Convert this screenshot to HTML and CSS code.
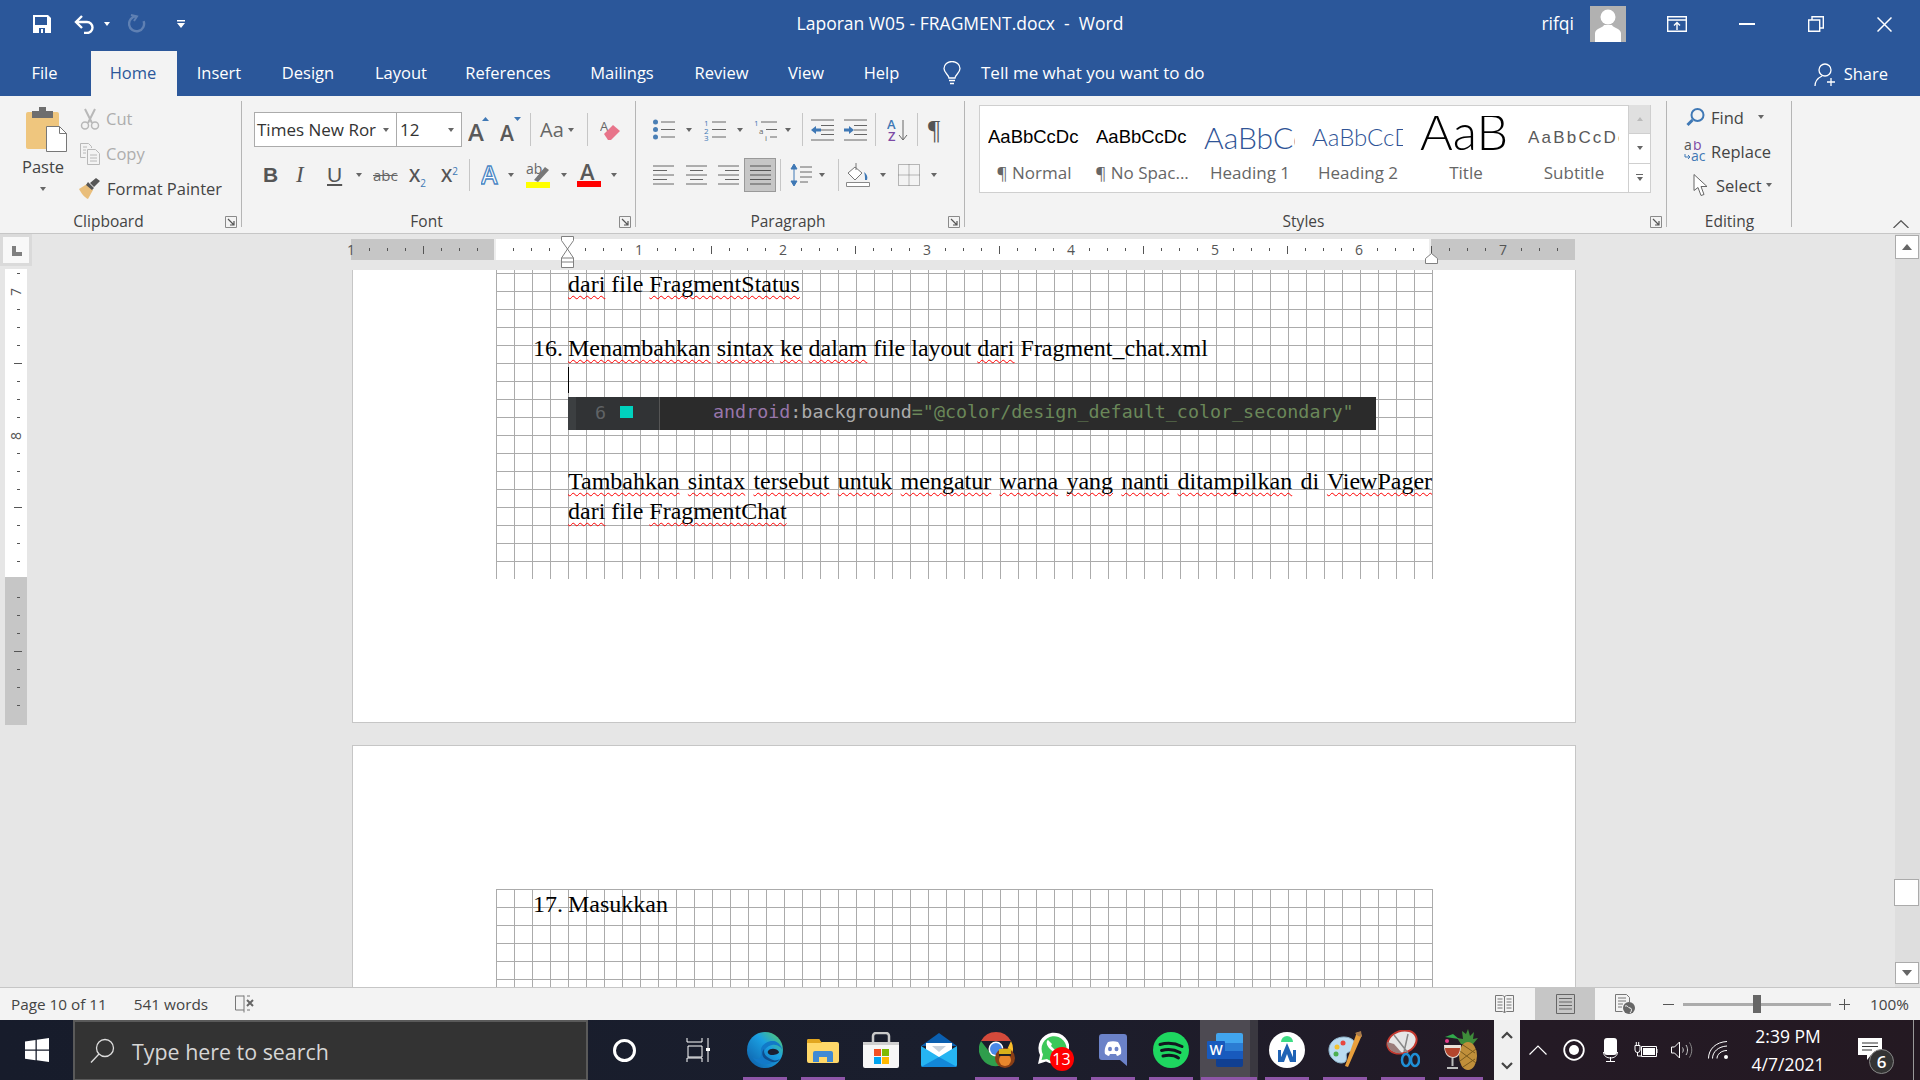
FILE: index.html
```html
<!DOCTYPE html>
<html lang="en">
<head>
    <meta charset="UTF-8">
    <title>Laporan W05 - FRAGMENT.docx - Word</title>
    <link rel="stylesheet" href="styles.css">
</head>
<body>
<svg class="defs" width="0" height="0">
    <symbol id="launcher" viewBox="0 0 12 12"><path d="M.5 11.5V.5h11v11z" fill="none" stroke="#8a8a8a"/><path d="M3 3l6 6M9 5v4H5" fill="none" stroke="#555" stroke-width="1.2"/></symbol>
</svg>
<div class="app">
    <!-- title bar -->
    <div class="titlebar">
        <div class="qat">
            <svg width="20" height="20" viewBox="0 0 20 20"><path d="M1 1h15l3 3v15H1z" fill="#fff"/><path d="M3 3h12v8H3zM7 14h6v5H7z" fill="#2B579A"/><path d="M9 15h2v4H9z" fill="#fff"/></svg>
            <svg class="qat-undo" width="22" height="19" viewBox="0 0 22 19"><path d="M3 7h11a5.5 5.5 0 0 1 0 11h-3" fill="none" stroke="#fff" stroke-width="2.4"/><path d="M9 1L3 7l6 6" fill="none" stroke="#fff" stroke-width="2.4"/></svg>
            <i class="caret caret-white qat-caret"></i>
            <svg class="qat-redo" width="18" height="20" viewBox="0 0 18 20"><path d="M7 2.5A7.5 7.5 0 1 0 15 6" fill="none" stroke="#5F80B3" stroke-width="2.4" transform="rotate(10 9 10)"/><path d="M3 1l6 1.5L6 7" fill="none" stroke="#5F80B3" stroke-width="2"/></svg>
            <svg class="qat-more" width="8" height="8" viewBox="0 0 8 8"><path d="M0 0h8v1.4H0zM0 3h8L4 8z" fill="#fff"/></svg>
        </div>
        <div class="doc-title">Laporan W05 - FRAGMENT.docx  -  Word</div>
        <div class="win-controls">
            <span class="user">rifqi</span>
            <svg class="avatar" width="36" height="36" viewBox="0 0 36 36"><path d="M0 0h36v36H0z" fill="#B1B1B1"/><circle cx="18" cy="11" r="7.5" fill="#fff"/><path d="M5 36v-9c1-5 8-5 9-8h8c1 3 8 3 9 8v9z" fill="#fff"/></svg>
            <svg class="wc-display" width="20" height="16" viewBox="0 0 20 16"><path d="M.7.7h18.6v14.6H.7zM1 4h18" fill="none" stroke="#fff" stroke-width="1.4"/><path d="M10 14V7M7 9.5L10 6.5l3 3" fill="none" stroke="#fff" stroke-width="1.4"/></svg>
            <svg class="wc-min" width="16" height="2" viewBox="0 0 16 2"><path d="M0 0h16v2H0z" fill="#fff"/></svg>
            <svg class="wc-restore" width="16" height="16" viewBox="0 0 16 16"><path d="M.7 4h11v11.3H.7zM4 4V.7h11.3V12H12" fill="none" stroke="#fff" stroke-width="1.4"/></svg>
            <svg class="wc-close" width="15" height="15" viewBox="0 0 15 15"><path d="M.5.5l14 14M14.5.5l-14 14" stroke="#fff" stroke-width="1.5"/></svg>
        </div>
    </div>

    <!-- tabs -->
    <div class="tabs">
        <div class="tab tab-file">File</div>
        <div class="tab tab-home">Home</div>
        <div class="tab tab-insert">Insert</div>
        <div class="tab tab-design">Design</div>
        <div class="tab tab-layout">Layout</div>
        <div class="tab tab-refs">References</div>
        <div class="tab tab-mail">Mailings</div>
        <div class="tab tab-review">Review</div>
        <div class="tab tab-view">View</div>
        <div class="tab tab-help">Help</div>
        <svg class="bulb" width="18" height="24" viewBox="0 0 18 24"><path d="M6 17c0-3-5-5-5-9.500a8 7 0 0 1 16 0C17 12 12 14 12 17z" fill="none" stroke="#fff" stroke-width="1.3"/><path d="M6 19.500h6M7 22.500h4" stroke="#fff" stroke-width="1.5"/></svg>
        <div class="tell">Tell me what you want to do</div>
        <div class="share">
            <svg width="23" height="24" viewBox="0 0 23 24"><circle cx="11" cy="8" r="6" fill="none" stroke="#fff" stroke-width="1.3"/><path d="M1 24c0-5 3-8 7-10M17 16v8M13 20h8" fill="none" stroke="#fff" stroke-width="1.3"/></svg>
            <span>Share</span>
        </div>
    </div>

    <!-- ribbon -->
    <div class="ribbon">
        <div class="group group-clipboard">
            <div class="group-body clip-body">
                <div class="paste">
                    <svg width="41" height="45" viewBox="0 0 41 45"><path d="M2 5h29a2 2 0 0 1 2 2v35H2a2 2 0 0 1-2-2V7a2 2 0 0 1 2-2z" fill="#EFC67E"/><path d="M6 4h7V0h7v4h7v7H6z" fill="#6E6E6E"/><path d="M20.500 19.500h13l7 7v18h-20z" fill="#fff" stroke="#777"/><path d="M33.500 19.500v7h7" fill="none" stroke="#777"/></svg>
                    <span class="paste-label">Paste</span>
                    <i class="caret paste-caret"></i>
                </div>
                <div class="clip-list">
                    <div class="clip-row muted">
                        <svg width="20" height="22" viewBox="0 0 20 22"><path d="M5 1l7 14M15 1L8 15" stroke="#B8B8B8" stroke-width="2" fill="none"/><circle cx="5" cy="17.500" r="3.500" fill="none" stroke="#B8B8B8" stroke-width="1.500"/><circle cx="15" cy="17.500" r="3.500" fill="none" stroke="#B8B8B8" stroke-width="1.500"/></svg>
                        <span>Cut</span>
                    </div>
                    <div class="clip-row muted">
                        <svg width="20" height="22" viewBox="0 0 20 22"><path d="M.5.5h8l3 3V5M.5.500v14h5M7.500 6.500h8l4 4v11h-12z" fill="#f3f3f3" stroke="#B8B8B8"/><path d="M10 12h7M10 15h7M10 18h7M3 4h4M3 7h3M3 10h3" stroke="#B8B8B8"/></svg>
                        <span>Copy</span>
                    </div>
                    <div class="clip-row clip-painter">
                        <svg width="22" height="21" viewBox="0 0 22 21"><path d="M0 11l8-5 6 6-5 9c-3-1-7-6-9-10z" fill="#E9BE7B"/><path d="M7 7l2-3 6 6-2 2zM11 5l6-5 4 3-6 6z" fill="#565656"/></svg>
                        <span>Format Painter</span>
                    </div>
                </div>
            </div>
            <div class="group-label">Clipboard</div>
            <svg class="launcher" width="12" height="12"><use href="#launcher"/></svg>
        </div>

        <div class="group group-font">
            <div class="group-body">
                <div class="font-row1">
                    <div class="combo">
                        <div class="combo-font"><span>Times New Ror</span><i class="caret"></i></div>
                        <div class="combo-size"><span>12</span><i class="caret"></i></div>
                    </div>
                    <svg width="24" height="26" viewBox="0 0 24 26"><text x="0" y="24" class="ic-text ic-bold" font-size="24" fill="#595959">A</text><path d="M14 4l3.500-4 3.500 4z" fill="#3F78B5"/></svg>
                    <svg width="22" height="26" viewBox="0 0 22 26"><text x="0" y="24" class="ic-text ic-bold" font-size="21" fill="#595959">A</text><path d="M14 0h7l-3.500 4z" fill="#3F78B5"/></svg>
                    <i class="vsep"></i>
                    <div class="icon-caret"><span class="aa">Aa</span><i class="caret"></i></div>
                    <i class="vsep"></i>
                    <svg width="20" height="22" viewBox="0 0 20 22"><text x="0" y="12" class="ic-text" font-size="13" fill="#666">A</text><path d="M4 15l9-9 7 6-9 9H8z" fill="#E8748A"/></svg>
                </div>
                <div class="font-row2">
                    <b class="fmt fmt-b">B</b>
                    <i class="fmt fmt-i">I</i>
                    <u class="fmt fmt-u">U</u>
                    <i class="caret"></i>
                    <s class="fmt-abc">abc</s>
                    <span class="fmt-x">X<sub>2</sub></span>
                    <span class="fmt-x">X<sup>2</sup></span>
                    <i class="vsep vsep-tall"></i>
                    <svg width="18" height="24" viewBox="0 0 18 24"><text x="0" y="21" class="ic-text ic-bold" font-size="25" fill="#fff" stroke="#4A86C4" stroke-width="1.300">A</text></svg>
                    <i class="caret"></i>
                    <svg width="24" height="25" viewBox="0 0 24 25"><text x="0" y="11" class="ic-text" font-size="14" fill="#666">ab</text><path d="M8 17L19 4l4 3-11 12z" fill="#777"/><path d="M0 19h24v6H0z" fill="#FFFF00"/></svg>
                    <i class="caret"></i>
                    <svg width="24" height="24" viewBox="0 0 24 24"><text x="3" y="17" class="ic-text ic-bold" font-size="22" fill="#595959">A</text><path d="M0 18h24v6H0z" fill="#FF0000"/></svg>
                    <i class="caret"></i>
                </div>
            </div>
            <div class="group-label">Font</div>
            <svg class="launcher" width="12" height="12"><use href="#launcher"/></svg>
        </div>

        <div class="group group-para">
            <div class="group-body">
                <div class="para-row1">
                    <svg width="22" height="21" viewBox="0 0 22 21"><circle cx="2.500" cy="3" r="2.500" fill="#4A7FB5"/><circle cx="2.500" cy="10.500" r="2.500" fill="#4A7FB5"/><circle cx="2.500" cy="18" r="2.500" fill="#4A7FB5"/><path d="M8 3h14M8 10.500h14M8 18h14" stroke="#666"/></svg>
                    <i class="caret"></i>
                    <svg width="22" height="22" viewBox="0 0 22 22"><text x="0" y="7" class="ic-text" font-size="8" fill="#3F78B5">1</text><text x="0" y="14.500" class="ic-text" font-size="8" fill="#3F78B5">2</text><text x="0" y="22" class="ic-text" font-size="8" fill="#3F78B5">3</text><path d="M8 3h14M8 10.500h14M8 18h14" stroke="#666"/></svg>
                    <i class="caret"></i>
                    <svg width="23" height="22" viewBox="0 0 23 22"><text x="0" y="7" class="ic-text" font-size="8" fill="#3F78B5">1</text><text x="5" y="14.500" class="ic-text" font-size="8" fill="#666">a</text><text x="11" y="22" class="ic-text" font-size="8" fill="#666">i</text><path d="M7 3h16M12 10.500h11M16 18h7" stroke="#666"/></svg>
                    <i class="caret"></i>
                    <i class="vsep"></i>
                    <svg width="23" height="22" viewBox="0 0 23 22"><path d="M0 1h23M10 6.500h13M10 11h13M10 15.500h13M0 21h23" stroke="#666"/><path d="M0 11l5-4v2.500h5v3H5V15z" fill="#3F78B5"/></svg>
                    <svg width="23" height="22" viewBox="0 0 23 22"><path d="M0 1h23M10 6.500h13M10 11h13M10 15.500h13M0 21h23" stroke="#666"/><path d="M10 11L5 7v2.500H0v3h5V15z" fill="#3F78B5"/></svg>
                    <i class="vsep"></i>
                    <svg width="21" height="24" viewBox="0 0 21 24"><text x="0" y="11" class="ic-text ic-bold" font-size="13" fill="#3F78B5">A</text><text x="1" y="23" class="ic-text ic-bold" font-size="13" fill="#7C4AA5">Z</text><path d="M16 2v19M12 17l4 5 4-5" fill="none" stroke="#666"/></svg>
                    <i class="vsep"></i>
                    <span class="pilcrow">¶</span>
                </div>
                <div class="para-row2">
                    <svg width="21" height="21" viewBox="0 0 21 21"><path d="M0 1h21M0 5.500h14M0 10h21M0 14.500h14M0 19h21" stroke="#666"/></svg>
                    <svg width="21" height="21" viewBox="0 0 21 21"><path d="M0 1h21M4 5.500h13M0 10h21M4 14.500h13M0 19h21" stroke="#666"/></svg>
                    <svg width="21" height="21" viewBox="0 0 21 21"><path d="M0 1h21M7 5.500h14M0 10h21M7 14.500h14M0 19h21" stroke="#666"/></svg>
                    <div class="justify-on"><svg width="21" height="21" viewBox="0 0 21 21"><path d="M0 1h21M0 5.500h21M0 10h21M0 14.500h21M0 19h21" stroke="#555"/></svg></div>
                    <i class="vsep vsep-tall"></i>
                    <svg width="22" height="24" viewBox="0 0 22 24"><path d="M4 2v20M1 6l3-5 3 5zM1 18l3 5 3-5z" fill="#3F78B5" stroke="#3F78B5"/><path d="M10 5h12M10 10h12M10 15h12M10 20h8" stroke="#666" transform="translate(0 -1)"/></svg>
                    <i class="caret"></i>
                    <i class="vsep vsep-tall"></i>
                    <svg width="24" height="24" viewBox="0 0 24 24"><path d="M9 4l7 6-7 7-7-7z" fill="#fff" stroke="#777"/><path d="M10 0v7" stroke="#777"/><path d="M18 9c3 2 4 5 3 8h-2c0-3 0-5-1-8z" fill="#3F78B5"/><path d="M.5 19.500h23v4H.5z" fill="#fff" stroke="#888"/></svg>
                    <i class="caret"></i>
                    <svg width="22" height="22" viewBox="0 0 22 22"><path d="M.5.500h21v21H.5zM11 .5v21M.5 11h21" fill="none" stroke="#777" stroke-dasharray="1 1"/></svg>
                    <i class="caret"></i>
                </div>
            </div>
            <div class="group-label">Paragraph</div>
            <svg class="launcher" width="12" height="12"><use href="#launcher"/></svg>
        </div>

        <div class="group group-styles">
            <div class="group-body">
                <div class="gallery">
                    <div class="style-item"><div class="preview pv-normal">AaBbCcDc</div><div class="style-name">¶ Normal</div></div>
                    <div class="style-item"><div class="preview pv-normal">AaBbCcDc</div><div class="style-name">¶ No Spac...</div></div>
                    <div class="style-item"><div class="preview pv-h1">AaBbCcDc</div><div class="style-name">Heading 1</div></div>
                    <div class="style-item"><div class="preview pv-h2">AaBbCcDc</div><div class="style-name">Heading 2</div></div>
                    <div class="style-item"><div class="preview pv-title">AaBbCc</div><div class="style-name">Title</div></div>
                    <div class="style-item"><div class="preview pv-sub">AaBbCcDc</div><div class="style-name">Subtitle</div></div>
                    <div class="gallery-scroll">
                        <div class="gs-btn gs-up"><i class="caret caret-up"></i></div>
                        <div class="gs-btn"><i class="caret"></i></div>
                        <div class="gs-btn gs-more"><i class="gs-bar"></i><i class="caret"></i></div>
                    </div>
                </div>
            </div>
            <div class="group-label">Styles</div>
            <svg class="launcher" width="12" height="12"><use href="#launcher"/></svg>
        </div>

        <div class="group group-edit">
            <div class="group-body edit-list">
                <div class="edit-row">
                    <svg width="20" height="20" viewBox="0 0 20 20"><circle cx="12" cy="8" r="6" fill="none" stroke="#3F78B5" stroke-width="2"/><path d="M7 13l-5 5" stroke="#3F78B5" stroke-width="3"/></svg>
                    <span>Find</span><i class="caret caret-find"></i>
                </div>
                <div class="edit-row">
                    <svg width="23" height="21" viewBox="0 0 23 21"><text x="0" y="9" class="ic-text" font-size="14" fill="#555">a</text><text x="9" y="9" class="ic-text" font-size="14" fill="#7C4AA5">b</text><text x="7" y="20" class="ic-text" font-size="14" fill="#3F78B5">ac</text><path d="M1 13v3h5M4 14l2 2-2 2" fill="none" stroke="#3F78B5"/></svg>
                    <span>Replace</span>
                </div>
                <div class="edit-row">
                    <svg class="select-ic" width="14" height="22" viewBox="0 0 14 22"><path d="M.5.500v16l4-3 3 8 3-1-3-8h6z" fill="#fff" stroke="#666"/></svg>
                    <span>Select</span><i class="caret caret-select"></i>
                </div>
            </div>
            <div class="group-label label-edit">Editing</div>
        </div>

        <svg class="collapse" width="16" height="8" viewBox="0 0 16 8"><path d="M.5 8L8 .7 15.500 8" fill="none" stroke="#555" stroke-width="1.200"/></svg>
    </div>

    <!-- document -->
    <div class="doc">
        <div class="vcol">
            <div class="tabsel"><svg width="10" height="10" viewBox="0 0 10 10"><path d="M0 0h4v6h6v4H0z" fill="#7F7F7F"/></svg></div>
            <div class="vscale">
                <div class="vhead"></div>
                <div class="vinch"><span>7</span></div>
                <div class="vinch"><span>8</span></div>
                <div class="vinch"></div>
            </div>
        </div>
        <div class="doc-main">
            <div class="hruler">
                <div class="hscale">
                    <div class="inch"><span>1</span></div>
                    <div class="inch"></div>
                    <div class="inch"><span>1</span></div>
                    <div class="inch"><span>2</span></div>
                    <div class="inch"><span>3</span></div>
                    <div class="inch"><span>4</span></div>
                    <div class="inch"><span>5</span></div>
                    <div class="inch"><span>6</span></div>
                    <div class="inch inch-end"><span>7</span></div>
                </div>
                <svg class="marker-left" width="13" height="32" viewBox="0 0 13 32"><path d="M.5.500h12v4L6.500 13 .5 4.500zM6.500 13l6 9v9.500H.5V22zM.5 22h12" fill="#fff" stroke="#808080"/><path d="M.5 26h12" stroke="#808080"/></svg>
                <svg class="marker-right" width="13" height="11" viewBox="0 0 13 11"><path d="M6.500.5l6 5v5H.5v-5z" fill="#fff" stroke="#808080"/></svg>
            </div>
            <div class="pages">
                <div class="page page-first">
                    <div class="grid grid-first">
                        <p class="line line-first"><span class="sp">dari</span> file <span class="sp">FragmentStatus</span></p>
                        <p class="line line-item"><span class="num">16.</span><span class="sp">Menambahkan</span> <span class="sp">sintax</span> <span class="sp">ke</span> <span class="sp">dalam</span> file layout <span class="sp">dari</span> Fragment_chat.xml</p>
                        <div class="text-cursor"></div>
                        <div class="code-shot">
                            <div class="code-gutter"><span class="code-no">6</span><i class="code-swatch"></i></div>
                            <div class="code-text"><span class="c-attr">android</span><span class="c-plain">:background</span><span class="c-str">="@color/design_default_color_secondary"</span></div>
                        </div>
                        <p class="line line-just"><span class="sp">Tambahkan</span> <span class="sp">sintax</span> <span class="sp">tersebut</span> <span class="sp">untuk</span> <span class="sp">mengatur</span> <span class="sp">warna</span> <span class="sp">yang</span> <span class="sp">nanti</span> <span class="sp">ditampilkan</span> di <span class="sp">ViewPager</span></p>
                        <p class="line line-next"><span class="sp">dari</span> file <span class="sp">FragmentChat</span></p>
                    </div>
                </div>
                <div class="page page-second">
                    <div class="grid grid-second">
                        <p class="line line-17"><span class="num">17.</span>Masukkan</p>
                    </div>
                </div>
            </div>
        </div>
        <div class="vscroll">
            <div class="sb-btn sb-up"><i class="sb-arrow sb-arrow-up"></i></div>
            <div class="sb-thumb"></div>
            <div class="sb-btn sb-down"><i class="sb-arrow"></i></div>
        </div>
    </div>

    <!-- status bar -->
    <div class="statusbar">
        <span class="st-page">Page 10 of 11</span>
        <span class="st-words">541 words</span>
        <svg class="st-proof" width="20" height="18" viewBox="0 0 20 18"><path d="M9 1H.5v14H9M9 .5v17M12 1h3M12 15h3" fill="none" stroke="#777"/><path d="M12 5l6 6M18 5l-6 6" stroke="#666" stroke-width="2"/></svg>
        <div class="st-right">
            <svg class="st-read" width="19" height="20" viewBox="0 0 19 20"><path d="M.5 1.500h7l2 1 2-1h7v16h-7l-2 1-2-1h-7zM9.500 2.500v16M2.500 5h5M2.500 8h5M2.500 11h5M2.500 14h5M11.500 5h5M11.500 8h5M11.500 11h5M11.500 14h5" fill="none" stroke="#777"/></svg>
            <div class="st-print"><svg width="19" height="20" viewBox="0 0 19 20"><path d="M.5.500h18v19H.5zM3 4.500h13M3 8h13M3 11.500h13M3 15h13" fill="none" stroke="#666"/></svg></div>
            <svg class="st-web" width="20" height="20" viewBox="0 0 20 20"><path d="M.5.500h11l3 3V8M.5.500v17h7M3 4h8M3 7h8M3 10h5M3 13h4" fill="none" stroke="#777"/><circle cx="14" cy="14" r="6" fill="#666"/><path d="M10 12c3-1 3 2 5 2s2 3 0 5" fill="none" stroke="#f3f3f3"/></svg>
            <i class="zoom-minus"></i>
            <div class="zoom-slider"><i class="zoom-thumb"></i></div>
            <svg class="zoom-plus" width="11" height="11" viewBox="0 0 11 11"><path d="M5.500 0v11M0 5.500h11" stroke="#555"/></svg>
            <span class="zoom-val">100%</span>
        </div>
    </div>

    <!-- taskbar -->
    <div class="taskbar">
        <div class="tb-start"><svg width="24" height="24" viewBox="0 0 24 24"><path d="M0 3.500l10.500-1.500v9.500H0zM11.800 1.800L24 0v11.500H11.800zM0 12.800h10.500v9.500L0 20.800zM11.800 12.800H24V24l-12.200-1.800z" fill="#fff"/></svg></div>
        <div class="tb-search">
            <svg width="25" height="25" viewBox="0 0 25 25"><circle cx="15" cy="10" r="8.500" fill="none" stroke="#ddd" stroke-width="1.300"/><path d="M9 16L1 24.500" stroke="#ddd" stroke-width="1.300"/></svg>
            <span>Type here to search</span>
        </div>
        <div class="tb-cortana"><i class="cortana-ring"></i></div>
        <div class="tb-taskview"><svg width="24" height="24" viewBox="0 0 24 24"><path d="M1 0v4h15V0M2 8h14v11H2zM1 24v-4h15v4M22 0v24" fill="none" stroke="#fff" stroke-width="1"/><path d="M20 10h4v3h-4z" fill="#fff"/></svg></div>

        <div class="app-slot on"><svg width="36" height="36" viewBox="0 0 36 36"><defs><linearGradient id="edgeA" x1="0" y1="1" x2="1" y2="0"><stop offset="0" stop-color="#0C59A4"/><stop offset=".6" stop-color="#1BA0E2"/><stop offset="1" stop-color="#5FD05A"/></linearGradient></defs><circle cx="18" cy="18" r="18" fill="url(#edgeA)"/><path d="M36 20c-1-5-6-8-11-7-6 1-9 6-8 11 1 4 6 7 10 6-7 4-18 3-22-6C9 30 16 26 14 19 13 14 20 8 27 9c5 1 8 6 9 11z" fill="#1279C8"/><path d="M21 19c2-3 9-3 11 1 0 2-4 3-7 3-3 0-5-2-4-4z" fill="#1B2031"/><path d="M20 28c-5-2-6-8-3-11-1 5 3 9 9 11 2 1 5 0 7-1-4 5-9 3-13 1z" fill="#0D4E8F"/></svg></div>
        <div class="app-slot on on-split"><svg width="32" height="26" viewBox="0 0 32 26"><path d="M0 4a2 2 0 0 1 2-2h10l2 3h16a2 2 0 0 1 2 2v17a2 2 0 0 1-2 2H2a2 2 0 0 1-2-2z" fill="#FFD869"/><path d="M0 4a2 2 0 0 1 2-2h10l3 4H0z" fill="#E2A61F"/><path d="M6 25v-9a2 2 0 0 1 2-2h16a2 2 0 0 1 2 2v9h-6v-5h-8v5z" fill="#3F8AD4"/></svg></div>
        <div class="app-slot"><svg width="36" height="36" viewBox="0 0 36 36"><path d="M10 10V4a3 3 0 0 1 3-3h10a3 3 0 0 1 3 3v6" fill="none" stroke="#C9C9C9" stroke-width="2.500"/><path d="M0 10h36v24a2 2 0 0 1-2 2H2a2 2 0 0 1-2-2z" fill="#F7F7F7"/><path d="M0 10h36v3H0z" fill="#CFCFCF"/><path d="M11 17h7v7h-7z" fill="#F25022"/><path d="M19 17h7v7h-7z" fill="#7FBA00"/><path d="M11 25h7v7h-7z" fill="#00A4EF"/><path d="M19 25h7v7h-7z" fill="#FFB900"/></svg></div>
        <div class="app-slot"><svg width="36" height="34" viewBox="0 0 36 34"><path d="M18 0l18 13H0z" fill="#0A5FB0"/><path d="M5 10h26v8l-13 8-13-8z" fill="#fff"/><path d="M11 13h14l-7 6z" fill="#C9D3DD"/><path d="M0 13l18 11 18-11v19a2 2 0 0 1-2 2H2a2 2 0 0 1-2-2z" fill="#26B5F2"/><path d="M0 34l18-10 18 10z" fill="#1287D8"/></svg></div>
        <div class="app-slot on on-split"><svg width="37" height="36" viewBox="0 0 37 36"><path d="M2 9a17 17 0 0 1 30 0H17z" fill="#D34A3B"/><path d="M32 9a17 17 0 0 1-13 25l7-12z" fill="#FBBD2A"/><path d="M2 9a17 17 0 0 0 17 25l7-12H12z" fill="#2F9E4C"/><circle cx="17" cy="17" r="7.500" fill="#fff"/><circle cx="17" cy="17" r="6" fill="#4A89E8"/><ellipse cx="26" cy="26" rx="10" ry="10" fill="#8A3F16"/><ellipse cx="26" cy="28" rx="6" ry="6" fill="#E8862C"/><path d="M20 17h12v5H20z" fill="#D8B11A"/><path d="M20 22h12v2H20z" fill="#222"/></svg></div>
        <div class="app-slot on"><div class="wa"><svg width="32" height="32" viewBox="0 0 32 32"><path d="M1 32l2-9A15.500 15.500 0 1 1 9 29.500z" fill="#fff"/><path d="M4.500 28l1.500-5.500A12.500 12.500 0 1 1 10 27z" fill="#3CC85A"/><path d="M11 8c-2 1-2 5 2 9s8 5 10 3l-3-3-2 1-4-4 1-2z" fill="#fff"/></svg><span class="wa-badge">13</span></div></div>
        <div class="app-slot on"><svg width="28" height="32" viewBox="0 0 28 32"><path d="M3 0h22a3 3 0 0 1 3 3v29l-7-6H3a3 3 0 0 1-3-3V3a3 3 0 0 1 3-3z" fill="#6B82C8"/><path d="M9 8c3-1 7-1 10 0 2 3 4 7 3 12-2 1-3 2-4 2l-1-2H11l-1 2c-1 0-2-1-4-2-1-5 1-9 3-12z" fill="#fff"/><ellipse cx="11" cy="15" rx="2" ry="2.200" fill="#6B82C8"/><ellipse cx="17.500" cy="15" rx="2" ry="2.200" fill="#6B82C8"/></svg></div>
        <div class="app-slot on"><svg width="36" height="36" viewBox="0 0 36 36"><circle cx="18" cy="18" r="18" fill="#1ED760"/><path d="M7 12.500c7-2 15-1.500 22 2M8.500 18.500c6-1.500 13-1 18.500 2M10 24c5-1 11-1 15.500 2" fill="none" stroke="#12171F" stroke-width="3" stroke-linecap="round"/></svg></div>
        <div class="app-slot on word-slot"><svg width="36" height="34" viewBox="0 0 36 34"><path d="M9 2a2 2 0 0 1 2-2h23a2 2 0 0 1 2 2v8H9z" fill="#41A5EE"/><path d="M9 10h27v8H9z" fill="#2B7CD3"/><path d="M9 18h27v8H9z" fill="#185ABD"/><path d="M9 26h27v6a2 2 0 0 1-2 2H11a2 2 0 0 1-2-2z" fill="#103F91"/><path d="M1 8h16a1 1 0 0 1 1 1v16a1 1 0 0 1-1 1H1a1 1 0 0 1-1-1V9a1 1 0 0 1 1-1z" fill="#185ABD"/><text x="9" y="22" text-anchor="middle" class="ic-text ic-bold" font-size="14" fill="#fff">W</text></svg></div>
        <div class="app-slot on"><svg width="36" height="36" viewBox="0 0 36 36"><circle cx="18" cy="18" r="18" fill="#fff"/><path d="M12 10a6 6 0 0 1 12 0z" fill="#3DDC84"/><path d="M18 11l-8 19h5l3-8 3 8h5z" fill="#1F63B5"/><path d="M9 18h3v12H9zM24 18h3v12h-3z" fill="#1F63B5"/></svg></div>
        <div class="app-slot on"><svg width="34" height="38" viewBox="0 0 34 38"><path d="M2 24C-2 14 6 6 16 6c8 0 13 5 11 11-1 4-6 3-8 5s1 6-2 9c-5 3-12-1-15-7z" fill="#BBDCF0" stroke="#8FB5CC"/><circle cx="9" cy="16" r="2.500" fill="#F2C230"/><circle cx="15" cy="12" r="2.500" fill="#E8483F"/><circle cx="8" cy="23" r="2.500" fill="#4CAF50"/><path d="M29 1l5 3-14 32-3-1z" fill="#E89F3C"/><path d="M27 2l6-2 1 6-4-1z" fill="#A77A4B"/></svg></div>
        <div class="app-slot on"><svg width="34" height="40" viewBox="0 0 34 40"><ellipse cx="16" cy="12" rx="15" ry="11" fill="#E6E6E6" stroke="#C2382E" stroke-width="2" transform="rotate(-20 16 12)"/><path d="M1 12c0 8 8 12 15 11L8 14z" fill="#9A7C7A"/><path d="M8 5l14 18M22 4L18 22" stroke="#888" stroke-width="1.500"/><ellipse cx="20" cy="30" rx="4" ry="6" fill="none" stroke="#1F8FD6" stroke-width="2.500"/><ellipse cx="29" cy="30" rx="4" ry="6" fill="none" stroke="#1F8FD6" stroke-width="2.500"/></svg></div>
        <div class="app-slot on"><svg width="34" height="42" viewBox="0 0 34 42"><path d="M24 0l2 7 4-4-1 7 5-1-5 6H17l-4-6 6 1-1-8 4 3z" fill="#3E8C3A"/><ellipse cx="24" cy="27" rx="9" ry="14" fill="#C08F3A"/><path d="M16 22l16 12M16 32l16-12M19 16l12 8M19 38l12-8" stroke="#7A5A1D"/><path d="M0 16h17c0 9-3 13-8 13S0 25 0 16z" fill="#E9E1D8"/><path d="M1 19h15c0 5-3 9-7 9s-8-4-8-9z" fill="#B3452D"/><path d="M8.500 29v8M3 39h11" stroke="#bbb" stroke-width="2"/><path d="M1 8l8-3 6 5z" fill="#31A84B"/><circle cx="3" cy="12" r="2" fill="#E83E8C"/></svg></div>

        <div class="tb-overflow">
            <svg width="12" height="8" viewBox="0 0 12 8"><path d="M1 7l5-5 5 5" fill="none" stroke="#444" stroke-width="2.200"/></svg>
            <svg width="12" height="8" viewBox="0 0 12 8"><path d="M1 1l5 5 5-5" fill="none" stroke="#444" stroke-width="2.200"/></svg>
        </div>
        <div class="tray"><svg width="18" height="10" viewBox="0 0 18 10"><path d="M.5 9.500L9 1l8.500 8.500" fill="none" stroke="#fff" stroke-width="1.200"/></svg></div>
        <div class="tray"><svg width="22" height="22" viewBox="0 0 22 22"><circle cx="11" cy="11" r="9.800" fill="none" stroke="#fff" stroke-width="1.800"/><circle cx="11" cy="11" r="5" fill="#fff"/></svg></div>
        <div class="tray"><svg width="15" height="24" viewBox="0 0 15 24"><path d="M4 0h7a3 3 0 0 1 3 3v11a3 3 0 0 1-3 3H4a3 3 0 0 1-3-3V3a3 3 0 0 1 3-3z" fill="#fff"/><path d="M.5 14c0 8 14 8 14 0M7.500 19v4M3 23.500h9" fill="none" stroke="#fff"/></svg></div>
        <div class="tray"><svg width="24" height="16" viewBox="0 0 24 16"><path d="M7.500 4.500h15v10h-15z" fill="#231A24" stroke="#fff"/><path d="M9 6h12v7H9z" fill="#fff"/><path d="M23 7v4" stroke="#fff"/><path d="M1 3.500h5V8a2.500 2.500 0 0 1-5 0zM2.300 0v3.500M4.700 0v3.500M3.500 10v4h4" fill="none" stroke="#fff"/></svg></div>
        <div class="tray"><svg width="22" height="18" viewBox="0 0 22 18"><path d="M.5 6h3L8.500 1v16l-5-5h-3z" fill="none" stroke="#fff"/><path d="M11.500 6.500c1 1.500 1 3.500 0 5M15 4c2 3 2 7 0 10" fill="none" stroke="#ccc"/><path d="M18.500 1.500c3 5 3 10 0 15" fill="none" stroke="#888"/></svg></div>
        <div class="tray"><svg width="20" height="18" viewBox="0 0 20 18"><path d="M.5 17.500C.5 8 8 1 19 .5M4.500 17.500C4.500 11 10 5.500 19 5M9 17.500c0-4 4-8 10-8" fill="none" stroke="#fff"/><circle cx="18" cy="16" r="2" fill="#fff"/></svg></div>
        <div class="clock"><div>2:39 PM</div><div>4/7/2021</div></div>
        <div class="notify">
            <svg width="24" height="22" viewBox="0 0 24 22"><path d="M0 0h24v17H13l-4 5v-5H0z" fill="#fff"/><path d="M4 5h16M4 8.500h16M4 12h10" stroke="#333"/></svg>
            <span class="notify-badge">6</span>
        </div>
        <div class="show-desktop"></div>
    </div>
</div>
</body>
</html>
```

FILE: styles.css
```css
html, body{
    margin: 0;
    padding: 0;
}
body{
    width: 1920px;
    height: 1080px;
    overflow: hidden;
    font-family: "Open Sans", "Liberation Sans", sans-serif;
    color: #444;
}
.defs{
    position: absolute;
}
svg{
    display: block;
    flex: none;
}
.ic-text{
    font-family: "Open Sans", "Liberation Sans", sans-serif;
}
.ic-bold{
    font-weight: 600;
}
.app{
    display: flex;
    flex-direction: column;
    height: 1080px;
}

/* title bar */
.titlebar{
    height: 48px;
    flex: none;
    background: #2B579A;
    color: #fff;
    display: grid;
    grid-template-columns: 1fr auto 1fr;
    align-items: center;
}
.qat{
    display: flex;
    align-items: center;
    padding-left: 32px;
}
.qat-undo{ margin-left: 21px; }
.qat-caret{ margin-left: 9px; }
.qat-redo{ margin-left: 18px; }
.qat-more{ margin-left: 31px; }
.doc-title{
    font-size: 17.5px;
    white-space: pre;
    padding-bottom: 2px;
}
.win-controls{
    display: flex;
    align-items: center;
    justify-content: flex-end;
    padding-right: 28px;
    font-size: 17.5px;
}
.user{ padding-bottom: 2px; }
.avatar{ margin-left: 16px; }
.wc-display{ margin-left: 41px; }
.wc-min{ margin-left: 52px; }
.wc-restore{ margin-left: 53px; }
.wc-close{ margin-left: 53px; }

/* tabs */
.tabs{
    height: 48px;
    flex: none;
    background: #2B579A;
    color: #fff;
    display: flex;
    align-items: flex-end;
    padding-left: 12px;
    font-size: 16.5px;
}
.tab{
    height: 45px;
    line-height: 43px;
    text-align: center;
}
.tab-file{ width: 65px; margin-right: 14px; }
.tab-home{ width: 86px; background: #F3F3F3; color: #2B579A; padding-right: 2px; box-sizing: border-box; }
.tab-insert{ width: 84px; }
.tab-design{ width: 94px; }
.tab-layout{ width: 92px; }
.tab-refs{ width: 122px; }
.tab-mail{ width: 106px; }
.tab-review{ width: 93px; }
.tab-view{ width: 76px; }
.tab-help{ width: 75px; }
.bulb{
    margin: 0 0 11px 24px;
}
.tell{
    height: 45px;
    line-height: 43px;
    margin-left: 20px;
    font-size: 17px;
}
.share{
    margin-left: auto;
    height: 45px;
    padding-right: 32px;
    display: flex;
    align-items: center;
    gap: 7px;
}

/* ribbon */
.ribbon{
    height: 138px;
    flex: none;
    box-sizing: border-box;
    background: #F3F3F3;
    border-bottom: 1px solid #C6C6C6;
    display: flex;
}
.group{
    position: relative;
    margin-top: 5px;
    height: 132px;
    display: flex;
    flex-direction: column;
    flex: none;
}
.group::after{
    content: "";
    position: absolute;
    top: 0;
    right: 0;
    width: 1px;
    height: 126px;
    background: #B5B5B5;
}
.group-body{
    height: 108px;
    flex: none;
}
.group-label{
    height: 24px;
    line-height: 25px;
    text-align: center;
    padding-right: 25px;
    font-size: 15.5px;
}
.launcher{
    position: absolute;
    right: 5px;
    bottom: 5px;
}
.group-clipboard{ width: 242px; }
.group-font{ width: 394px; }
.group-para{ width: 329px; }
.group-styles{ width: 702px; }
.group-edit{ width: 125px; }
.label-edit{ padding-right: 0; }

.caret{
    display: block;
    width: 0;
    height: 0;
    border: 3.5px solid transparent;
    border-top: 4px solid #666;
    border-bottom: 0;
}
.caret-white{ border-top-color: #fff; }
.caret-up{
    border-top: 0;
    border-bottom: 4px solid #BBB;
}

.clip-body{
    display: grid;
    grid-template-columns: 79px 1fr;
}
.paste{
    display: flex;
    flex-direction: column;
    padding: 6px 0 0 26px;
}
.paste-label{
    margin: 5px 0 0 -4px;
    line-height: 20px;
    font-size: 16.5px;
}
.paste-caret{
    margin: 10px 0 0 14px;
}
.clip-row{
    height: 35px;
    display: flex;
    align-items: center;
    gap: 6px;
    font-size: 16.5px;
    margin-left: 1px;
}
.muted{ color: #ADADAD; }
.clip-painter{ margin-left: 0; }

.vsep{
    display: block;
    width: 1px;
    height: 33px;
    background: #C6C6C6;
}
.vsep-tall{ height: 32px; }

.font-row1, .font-row2, .para-row1, .para-row2{
    display: grid;
    align-items: center;
}
.font-row2 .caret, .para-row1 .caret, .para-row2 .caret{
    margin-left: -3px;
}
.font-row1{
    margin: 11px 0 0 12px;
    height: 35px;
    grid-template-columns: 214px 32px 30px 10px 47px 13px auto;
    justify-content: start;
}
.combo{
    display: flex;
    width: 208px;
    height: 35px;
    box-sizing: border-box;
    background: #fff;
    border: 1px solid #ABABAB;
    font-size: 17px;
    color: #333;
}
.combo-font{
    width: 142px;
    border-right: 1px solid #ABABAB;
    box-sizing: border-box;
    display: flex;
    align-items: center;
    justify-content: space-between;
    padding: 0 7px 0 2px;
    white-space: nowrap;
}
.combo-size{
    flex: 1;
    display: flex;
    align-items: center;
    justify-content: space-between;
    padding: 0 7px 0 3px;
}
.icon-caret{
    display: flex;
    align-items: center;
    gap: 2px;
}
.aa{
    font-size: 20px;
    color: #666;
    width: 26px;
}
.font-row2{
    margin: 11px 0 0 21px;
    height: 34px;
    grid-template-columns: 33px 31px 32px 14px 36px 32px 28px 12px 30px 15px 38px 13px 37px auto;
    justify-content: start;
}
.fmt{
    font-family: "Liberation Sans", sans-serif;
    font-size: 21px;
    color: #555;
    line-height: 24px;
}
.fmt-b{ font-weight: 700; }
.fmt-i{ font-family: "Liberation Serif", serif; font-size: 23px; }
.fmt-abc{
    font-size: 15px;
    color: #666;
}
.fmt-x{
    font-size: 18px;
    font-weight: 600;
    color: #555;
    line-height: 24px;
}
.fmt-x sub, .fmt-x sup{
    font-size: 10px;
    font-weight: 400;
    color: #3F78B5;
    line-height: 0;
}

.para-row1{
    margin: 11px 0 0 17px;
    height: 35px;
    grid-template-columns: 36px 15px 36px 14px 34px 14px 9px 33px 31px 12px 30px 11px auto;
    justify-content: start;
}
.para-row2{
    margin: 11px 0 0 17px;
    height: 34px;
    grid-template-columns: 33px 32px 26px 36px 10px 32px 16px 8px 37px 15px 36px auto;
    justify-content: start;
}
.pilcrow{
    font-family: "Liberation Serif", serif;
    font-size: 27px;
    line-height: 30px;
    color: #555;
}
.justify-on{
    width: 32px;
    height: 34px;
    box-sizing: border-box;
    background: #C6C6C6;
    border: 1px solid #999;
    display: flex;
    align-items: center;
    justify-content: center;
}

.gallery{
    display: flex;
    margin: 4px 0 0 14px;
    width: 672px;
    height: 88px;
    box-sizing: border-box;
    background: #fff;
    border: 1px solid #CFCFCF;
}
.style-item{
    width: 108px;
    flex: none;
    padding-left: 8px;
    box-sizing: border-box;
}
.preview{
    width: 91px;
    height: 40px;
    margin-top: 10px;
    line-height: 42px;
    overflow: hidden;
    white-space: nowrap;
    font-family: "Liberation Sans", sans-serif;
}
.pv-normal{ font-size: 18.5px; color: #000; }
.pv-h1{ font-size: 30px; color: #2F5496; font-family: Lato, sans-serif; font-weight: 300; }
.pv-h2{ font-size: 24px; color: #2F5496; font-family: Lato, sans-serif; font-weight: 300; }
.pv-title{ font-size: 50px; color: #000; font-family: Lato, sans-serif; font-weight: 300; line-height: 30px; }
.pv-sub{ font-size: 17px; color: #5A5A5A; letter-spacing: 2.2px; line-height: 44px; }
.style-name{
    margin: 4px 0 0 -8px;
    text-align: center;
    line-height: 26px;
    font-size: 17px;
    color: #666;
}
.gallery-scroll{
    flex: 1;
    margin-top: -1px;
    border-left: 1px solid #CFCFCF;
    display: flex;
    flex-direction: column;
}
.gs-btn{
    flex: 1;
    display: flex;
    flex-direction: column;
    align-items: center;
    justify-content: center;
    gap: 2px;
    border-bottom: 1px solid #CFCFCF;
}
.gs-up{ background: #E0E0E0; }
.gs-more{ border-bottom: 0; }
.gs-bar{
    width: 7px;
    height: 1px;
    background: #666;
}

.edit-list{
    padding-left: 17px;
}
.edit-row{
    height: 34px;
    display: flex;
    align-items: center;
    font-size: 16.5px;
    position: relative;
    top: -1px;
}
.edit-row svg{
    margin-right: 4px;
}
.edit-row svg:first-child{
    width: 23px;
}
.select-ic{
    padding-left: 5px;
    box-sizing: content-box;
}
.caret-find{ margin-left: 14px; }
.caret-select{ margin-left: 4px; }
.collapse{
    margin: auto 11px 5px auto;
}

/* document area */
.doc{
    height: 753px;
    flex: none;
    display: flex;
    background: #E6E6E6;
}
.vcol{
    width: 30px;
    flex: none;
}
.tabsel{
    width: 26px;
    height: 26px;
    box-sizing: border-box;
    margin: 3px 1px 6px 3px;
    background: #F8F8F8;
    box-shadow: 0 0 0 3px #DADADA;
    display: flex;
    align-items: center;
    justify-content: center;
    padding: 2px 0 0 2px;
}
.vscale{
    width: 22px;
    margin-left: 5px;
    height: 456px;
    background: linear-gradient(#fff 0 308px, #C6C6C6 308px);
    --t: linear-gradient(#555, #555);
}
.vhead{
    height: 22px;
    background: var(--t) 12px 4px / 3px 1px no-repeat;
}
.vinch{
    height: 144px;
    display: flex;
    justify-content: center;
    background:
        var(--t) 12px 18px / 3px 1px no-repeat,
        var(--t) 12px 36px / 3px 1px no-repeat,
        var(--t) 12px 54px / 3px 1px no-repeat,
        var(--t) 9px 72px / 8px 1px no-repeat,
        var(--t) 12px 90px / 3px 1px no-repeat,
        var(--t) 12px 108px / 3px 1px no-repeat,
        var(--t) 12px 126px / 3px 1px no-repeat;
}
.vinch span{
    height: 0;
    line-height: 0;
    margin-top: 3px;
    font-size: 14px;
    color: #555;
    transform: rotate(-90deg);
    padding-left: 4px;
}
.doc-main{
    flex: 1;
    min-width: 0;
    display: flex;
    flex-direction: column;
}
.hruler{
    position: relative;
    height: 36px;
    flex: none;
}
.hscale{
    display: flex;
    width: 1224px;
    height: 21px;
    margin: 5px 0 0 321px;
    background: linear-gradient(90deg, #C6C6C6 0 143px, #EDEDED 143px 145px, #fff 145px 1078px, #EDEDED 1078px 1080px, #C6C6C6 1080px);
    --t: linear-gradient(#555, #555);
}
.inch{
    width: 144px;
    flex: none;
    height: 21px;
    line-height: 21px;
    font-size: 14px;
    color: #555;
    background:
        var(--t) 18px 50% / 1px 3px no-repeat,
        var(--t) 36px 50% / 1px 3px no-repeat,
        var(--t) 54px 50% / 1px 3px no-repeat,
        var(--t) 72px 50% / 1px 8px no-repeat,
        var(--t) 90px 50% / 1px 3px no-repeat,
        var(--t) 108px 50% / 1px 3px no-repeat,
        var(--t) 126px 50% / 1px 3px no-repeat;
}
.inch-end{
    width: 72px;
    background-size: 1px 3px, 1px 3px, 1px 3px, 0 0, 0 0, 0 0, 0 0;
}
.inch span{
    display: block;
    width: 12px;
    margin-left: -6px;
    text-align: center;
}
.marker-left{
    position: absolute;
    left: 531px;
    top: 2px;
}
.marker-right{
    position: absolute;
    left: 1395px;
    top: 19px;
}
.pages{
    height: 717px;
    overflow: hidden;
    padding-left: 322px;
}
.page{
    width: 1224px;
    box-sizing: border-box;
    background: #fff;
    border: 1px solid #C6C6C6;
    padding-left: 143px;
}
.page-first{
    height: 453px;
    border-top: 0;
}
.page-second{
    height: 300px;
    margin-top: 22px;
    padding-top: 143px;
}
.grid{
    display: flow-root;
    width: 937px;
    box-sizing: border-box;
    padding-left: 72px;
    padding-right: 1px;
    background-image:
        linear-gradient(90deg, #ABABAB 1px, transparent 1px),
        linear-gradient(#ABABAB 1px, transparent 1px);
    background-size: 18px 18px;
    font-family: "Liberation Serif", serif;
    font-size: 24px;
    color: #000;
}
.grid-first{
    height: 309px;
    background-position: 0 0, 0 3px;
}
.grid-second{
    height: 160px;
}
.line{
    margin: 0;
    line-height: 32px;
    white-space: nowrap;
}
.line-first{ margin-top: -2px; }
.line-item{ margin-top: 32px; }
.line-just{
    margin-top: 35px;
    text-align: justify;
    text-align-last: justify;
}
.line-next{ margin-top: -2px; }
.line-17{ margin-top: -1px; }
.num{
    display: inline-block;
    width: 35px;
    margin-left: -35px;
}
.sp{
    text-decoration: underline wavy #F00 1px;
    text-underline-offset: 3px;
    text-decoration-skip-ink: none;
}
.text-cursor{
    width: 1px;
    height: 26px;
    margin-top: 3px;
    background: #000;
}
.code-shot{
    display: flex;
    width: 808px;
    height: 33px;
    margin-top: 4px;
    background: #2B2B2B;
    font-family: "DejaVu Sans Mono", monospace;
    font-size: 18.35px;
    line-height: 29px;
}
.code-gutter{
    width: 92px;
    flex: none;
    box-sizing: border-box;
    display: flex;
    align-items: center;
    padding: 0 0 3px 27px;
    background: linear-gradient(90deg, #3C3F41 0 8px, #313335 8px);
    border-right: 1px solid #555;
}
.code-no{
    color: #606366;
    width: 25px;
}
.code-swatch{
    width: 13px;
    height: 12px;
    background: #00D2BE;
}
.code-text{
    padding-left: 53px;
    white-space: pre;
}
.c-attr{ color: #9876AA; }
.c-plain{ color: #ABABAB; }
.c-str{ color: #6A8759; }

.vscroll{
    width: 25px;
    flex: none;
    margin-left: 2px;
    box-sizing: border-box;
    padding: 1px 1px 0 0;
    background: #DEDEDE;
    display: flex;
    flex-direction: column;
}
.sb-btn{
    height: 24px;
    flex: none;
    box-sizing: border-box;
    background: #fff;
    border: 1px solid #ABABAB;
    display: flex;
    align-items: center;
    justify-content: center;
}
.sb-down{
    height: 22px;
    margin-top: 56px;
}
.sb-thumb{
    height: 27px;
    margin: 620px 0 0 -1px;
    background: #fff;
    border: 1px solid #ABABAB;
    box-sizing: border-box;
}
.sb-arrow{
    display: block;
    width: 0;
    height: 0;
    border: 5.5px solid transparent;
    border-top: 6px solid #666;
    border-bottom: 0;
}
.sb-arrow-up{
    border-top: 0;
    border-bottom: 6px solid #666;
}

/* status bar */
.statusbar{
    height: 33px;
    flex: none;
    box-sizing: border-box;
    background: #F3F3F3;
    border-top: 1px solid #C6C6C6;
    display: flex;
    align-items: center;
    padding-left: 11px;
    font-size: 15.3px;
    color: #444;
}
.st-words{ margin-left: 27px; }
.st-proof{ margin-left: 27px; }
.st-right{
    margin-left: auto;
    height: 32px;
    display: flex;
    align-items: center;
    padding-right: 11px;
}
.st-print{
    width: 60px;
    height: 32px;
    margin-left: 21px;
    background: #C6C6C6;
    display: flex;
    align-items: center;
    justify-content: center;
}
.st-web{ margin-left: 20px; }
.zoom-minus{
    display: block;
    width: 11px;
    height: 1px;
    margin-left: 28px;
    background: #555;
}
.zoom-slider{
    position: relative;
    width: 148px;
    height: 3px;
    margin-left: 9px;
    background: #ABABAB;
}
.zoom-thumb{
    position: absolute;
    left: 70px;
    top: -8px;
    width: 8px;
    height: 18px;
    background: #666;
}
.zoom-plus{ margin-left: 8px; }
.zoom-val{ margin-left: 20px; }

/* taskbar */
.taskbar{
    height: 60px;
    flex: none;
    display: flex;
    background: linear-gradient(90deg, #171C2B 0, #1A1E2D 50%, #241A25 80%, #241922);
    color: #fff;
}
.tb-start{
    width: 73px;
    flex: none;
    display: flex;
    align-items: center;
    justify-content: center;
}
.tb-search{
    width: 515px;
    flex: none;
    box-sizing: border-box;
    background: #333;
    border: 2px solid #5A5A5A;
    border-bottom: 1px solid #5A5A5A;
    display: flex;
    align-items: center;
    padding: 0 0 0 15px;
    gap: 17px;
    font-size: 21.4px;
    color: #D6D6D6;
}
.tb-search span{
    line-height: 28px;
    padding-top: 2px;
}
.tb-cortana{
    width: 72px;
    flex: none;
    display: flex;
    align-items: center;
    justify-content: center;
}
.cortana-ring{
    display: block;
    width: 23px;
    height: 23px;
    box-sizing: border-box;
    border: 3px solid #fff;
    border-radius: 50%;
}
.tb-taskview{
    width: 76px;
    flex: none;
    display: flex;
    align-items: center;
    justify-content: center;
}
.app-slot{
    position: relative;
    width: 58px;
    flex: none;
    display: flex;
    align-items: center;
    justify-content: center;
}
.on::after{
    content: "";
    position: absolute;
    left: 7px;
    right: 7px;
    bottom: 0;
    height: 3px;
    background: #8E56A8;
}
.word-slot{
    box-sizing: border-box;
    padding-right: 8px;
    background: linear-gradient(90deg, #4D4A52 0 50px, #3A3840 50px);
}
.word-slot::after{
    left: 1px;
    right: 1px;
}
.wa{
    position: relative;
    width: 37px;
    height: 36px;
}
.wa-badge{
    position: absolute;
    left: 13px;
    top: 15px;
    width: 24px;
    height: 24px;
    border-radius: 50%;
    background: #F00;
    color: #fff;
    font-size: 16px;
    line-height: 24px;
    text-align: center;
}
.tb-overflow{
    width: 26px;
    flex: none;
    margin-left: 4px;
    background: #F0F0F0;
    display: flex;
    flex-direction: column;
    align-items: center;
    justify-content: center;
    gap: 23px;
}
.tray{
    width: 36px;
    flex: none;
    display: flex;
    align-items: center;
    justify-content: center;
}
.clock{
    width: 104px;
    flex: none;
    text-align: center;
    font-size: 17.5px;
    line-height: 28px;
    padding-top: 2px;
    box-sizing: border-box;
}
.notify{
    position: relative;
    width: 73px;
    flex: none;
    box-sizing: border-box;
    padding: 18px 0 0 18px;
}
.notify-badge{
    position: absolute;
    left: 29px;
    top: 29px;
    width: 25px;
    height: 25px;
    box-sizing: border-box;
    border: 1px solid #888;
    border-radius: 50%;
    background: #333;
    font-size: 17px;
    font-weight: 600;
    line-height: 23px;
    text-align: center;
}
.show-desktop{
    flex: 1;
    border-left: 1px solid #999;
}
```
